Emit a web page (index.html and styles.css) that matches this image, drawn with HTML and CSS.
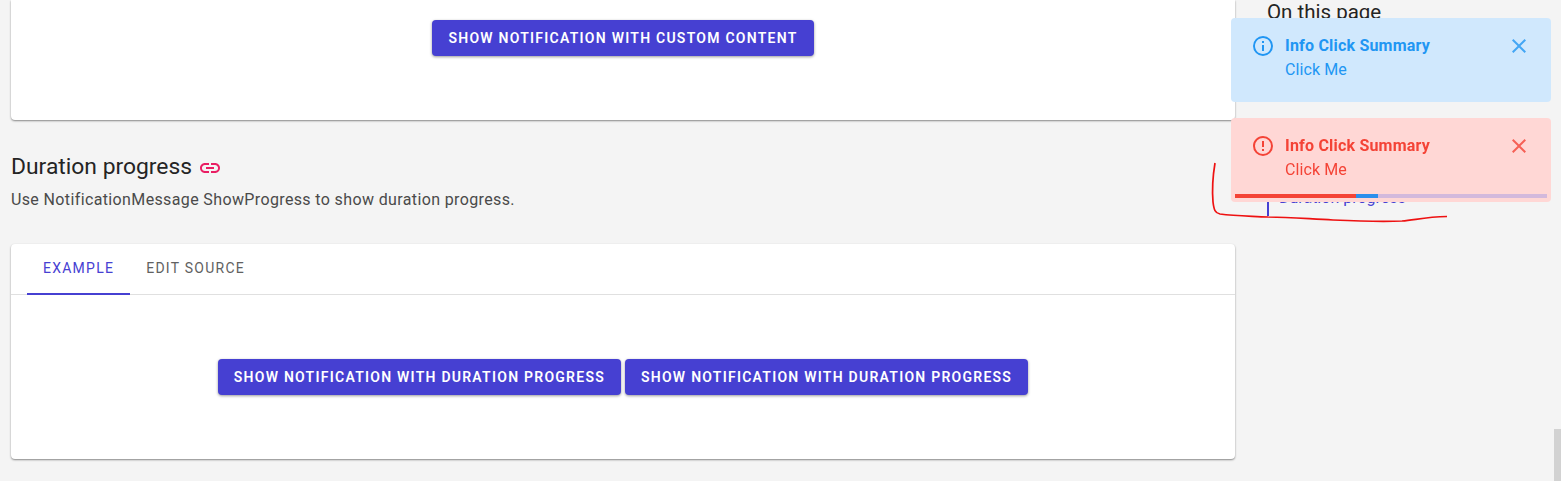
FILE: index.html
```html
<!DOCTYPE html>
<html lang="en">
<head>
    <meta charset="UTF-8">
    <meta name="viewport" content="width=device-width, initial-scale=1.0">
    <title>Notification</title>
    <link rel="stylesheet" href="styles.css">
</head>
<body>

    <div class="page">
        <main class="main">
            <div class="card card-top">
                <button class="btn">Show notification with custom content</button>
            </div>

            <h2 class="section-title">
                Duration progress
                <svg class="link-icon" viewBox="0 0 24 24"><path d="M3.9 12c0-1.71 1.39-3.1 3.1-3.1h4V7H7c-2.76 0-5 2.24-5 5s2.24 5 5 5h4v-1.9H7c-1.71 0-3.1-1.39-3.1-3.1zM8 13h8v-2H8v2zm9-6h-4v1.9h4c1.71 0 3.1 1.39 3.1 3.1s-1.39 3.1-3.1 3.1h-4V17h4c2.76 0 5-2.24 5-5s-2.24-5-5-5z"/></svg>
            </h2>
            <p class="section-text">Use NotificationMessage ShowProgress to show duration progress.</p>

            <div class="card card-example">
                <div class="tabs">
                    <span class="tab active">Example</span>
                    <span class="tab">Edit source</span>
                </div>
                <div class="card-body">
                    <button class="btn">Show notification with duration progress</button>
                    <button class="btn">Show notification with duration progress</button>
                </div>
            </div>
        </main>

        <aside class="side">
            <div class="side-title">On this page</div>
            <a href="#" class="side-link">Duration progress</a>
        </aside>
    </div>

    <div class="toasts">
        <div class="toast toast-info">
            <svg class="toast-icon" viewBox="0 0 24 24"><path d="M11,7H13V9H11V7M11,11H13V17H11V11M12,2A10,10 0 0,0 2,12A10,10 0 0,0 12,22A10,10 0 0,0 22,12A10,10 0 0,0 12,2M12,20C7.59,20 4,16.41 4,12C4,7.59 7.59,4 12,4C16.41,4 20,7.59 20,12C20,16.41 16.41,20 12,20Z"/></svg>
            <div class="toast-text">
                <div class="toast-title">Info Click Summary</div>
                <div class="toast-msg">Click Me</div>
            </div>
            <svg class="toast-close" viewBox="0 0 24 24"><path d="M19 6.41L17.59 5 12 10.59 6.41 5 5 6.41 10.59 12 5 17.59 6.41 19 12 13.41 17.59 19 19 17.59 13.41 12z"/></svg>
        </div>
        <div class="toast toast-error">
            <svg class="toast-icon" viewBox="0 0 24 24"><path d="M11,15H13V17H11V15M11,7H13V13H11V7M12,2C6.47,2 2,6.5 2,12A10,10 0 0,0 12,22A10,10 0 0,0 22,12A10,10 0 0,0 12,2M12,20A8,8 0 0,1 4,12A8,8 0 0,1 12,4A8,8 0 0,1 20,12A8,8 0 0,1 12,20Z"/></svg>
            <div class="toast-text">
                <div class="toast-title">Info Click Summary</div>
                <div class="toast-msg">Click Me</div>
            </div>
            <svg class="toast-close" viewBox="0 0 24 24"><path d="M19 6.41L17.59 5 12 10.59 6.41 5 5 6.41 10.59 12 5 17.59 6.41 19 12 13.41 17.59 19 19 17.59 13.41 12z"/></svg>
            <div class="progress">
                <div class="progress-red"></div>
                <div class="progress-blue"></div>
            </div>
        </div>
    </div>

    <!-- pen mark drawn over the screenshot -->
    <svg class="pen-mark" viewBox="0 0 1561 481">
        <path d="M1215 163C1213 175 1212 190 1213 202C1214 210 1215 213 1220 214C1235 216 1250 216 1268 217C1290 217 1310 219 1333 220C1355 221 1380 222 1402 221C1415 220 1425 217 1447 216.500"/>
    </svg>

    <div class="scroll-thumb"></div>

</body>
</html>
```

FILE: styles.css
```css
html, body {
    height: 100%;
}
body {
    font-family: Roboto, sans-serif;
    margin: 0;
    padding: 0;
    background-color: #f4f4f4;
    overflow: hidden;
    color: #4a4a4a;
}
.page {
    display: flex;
    padding-left: 11px;
}
.main {
    width: 1224px;
    flex-shrink: 0;
}
.card {
    background-color: white;
    border-radius: 4px;
    box-shadow: 0 1px 2px rgba(0, 0, 0, 0.45);
}
.card-top {
    height: 120px;
    padding-top: 20px;
    box-sizing: border-box;
    text-align: center;
    border-radius: 0 0 4px 4px;
}
.btn {
    height: 36px;
    padding: 0 16px;
    border: none;
    border-radius: 4px;
    background-color: #4640d2;
    color: white;
    font-family: Roboto, sans-serif;
    font-size: 14px;
    font-weight: 600;
    letter-spacing: 1.25px;
    text-transform: uppercase;
    cursor: pointer;
    box-shadow: 0 1px 3px rgba(0, 0, 0, 0.4);
}
.section-title {
    display: flex;
    align-items: center;
    gap: 6px;
    margin: 32px 0 0;
    height: 28px;
    font-size: 22.85px;
    font-weight: 400;
    color: #242424;
}
.link-icon {
    width: 24px;
    height: 24px;
    margin-top: 4px;
    fill: #e91e63;
}
.section-text {
    margin: 10px 0 0;
    font-size: 16px;
    line-height: 20px;
    letter-spacing: 0.37px;
}
.card-example {
    margin-top: 34px;
    height: 215px;
}
.tabs {
    display: flex;
    height: 50px;
    padding-left: 16px;
    border-bottom: 1px solid #e0e0e0;
}
.tab {
    padding: 0 16px;
    height: 50px;
    box-sizing: border-box;
    line-height: 49px;
    font-size: 14px;
    font-weight: 400;
    letter-spacing: 1.25px;
    text-transform: uppercase;
    color: #616161;
}
.tab.active {
    color: #4640d2;
    border-bottom: 2px solid #4640d2;
    height: 51px;
}
.card-body {
    display: flex;
    justify-content: center;
    gap: 4px;
    padding-top: 64px;
}
.side {
    padding-left: 32px;
    flex-grow: 1;
}
.side-title {
    font-size: 20.5px;
    line-height: 24px;
    color: #242424;
}
.side-link {
    display: block;
    margin-top: 168px;
    padding-left: 10px;
    height: 24px;
    line-height: 12px;
    font-size: 16px;
    color: #4640d2;
    text-decoration: none;
    border-left: 2px solid #4640d2;
}
.toasts {
    position: fixed;
    top: 18px;
    left: 1231px;
    width: 320px;
    display: flex;
    flex-direction: column;
    gap: 16px;
}
.toast {
    position: relative;
    display: flex;
    height: 84px;
    box-sizing: border-box;
    padding: 16px 20px;
    border-radius: 4px;
}
.toast-info {
    background-color: #d0e8fd;
    color: #2196f3;
    fill: #2196f3;
}
.toast-error {
    background-color: #ffd7d5;
    color: #f44336;
    fill: #f44336;
}
.toast-icon {
    width: 24px;
    height: 24px;
    margin-right: 10px;
    flex-shrink: 0;
}
.toast-text {
    flex-grow: 1;
    font-size: 16px;
    line-height: 24px;
}
.toast-title {
    font-weight: 700;
    letter-spacing: 0.2px;
}
.toast-msg {
    letter-spacing: 0.1px;
}
.toast-close {
    width: 24px;
    height: 24px;
    opacity: 0.8;
}
.progress {
    position: absolute;
    left: 4px;
    right: 4px;
    bottom: 4px;
    height: 4px;
    display: flex;
    background-color: #d3b9dc;
}
.progress-red {
    width: 121px;
    background-color: #f44336;
}
.progress-blue {
    width: 22px;
    background-color: #2b8fec;
}
.pen-mark {
    position: fixed;
    top: 0;
    left: 0;
    width: 1561px;
    height: 481px;
    pointer-events: none;
}
.pen-mark path {
    fill: none;
    stroke: #ee1111;
    stroke-width: 1.700;
}
.scroll-thumb {
    position: fixed;
    right: 0;
    bottom: 0;
    width: 7px;
    height: 52px;
    background-color: #d2d2d2;
}
```
